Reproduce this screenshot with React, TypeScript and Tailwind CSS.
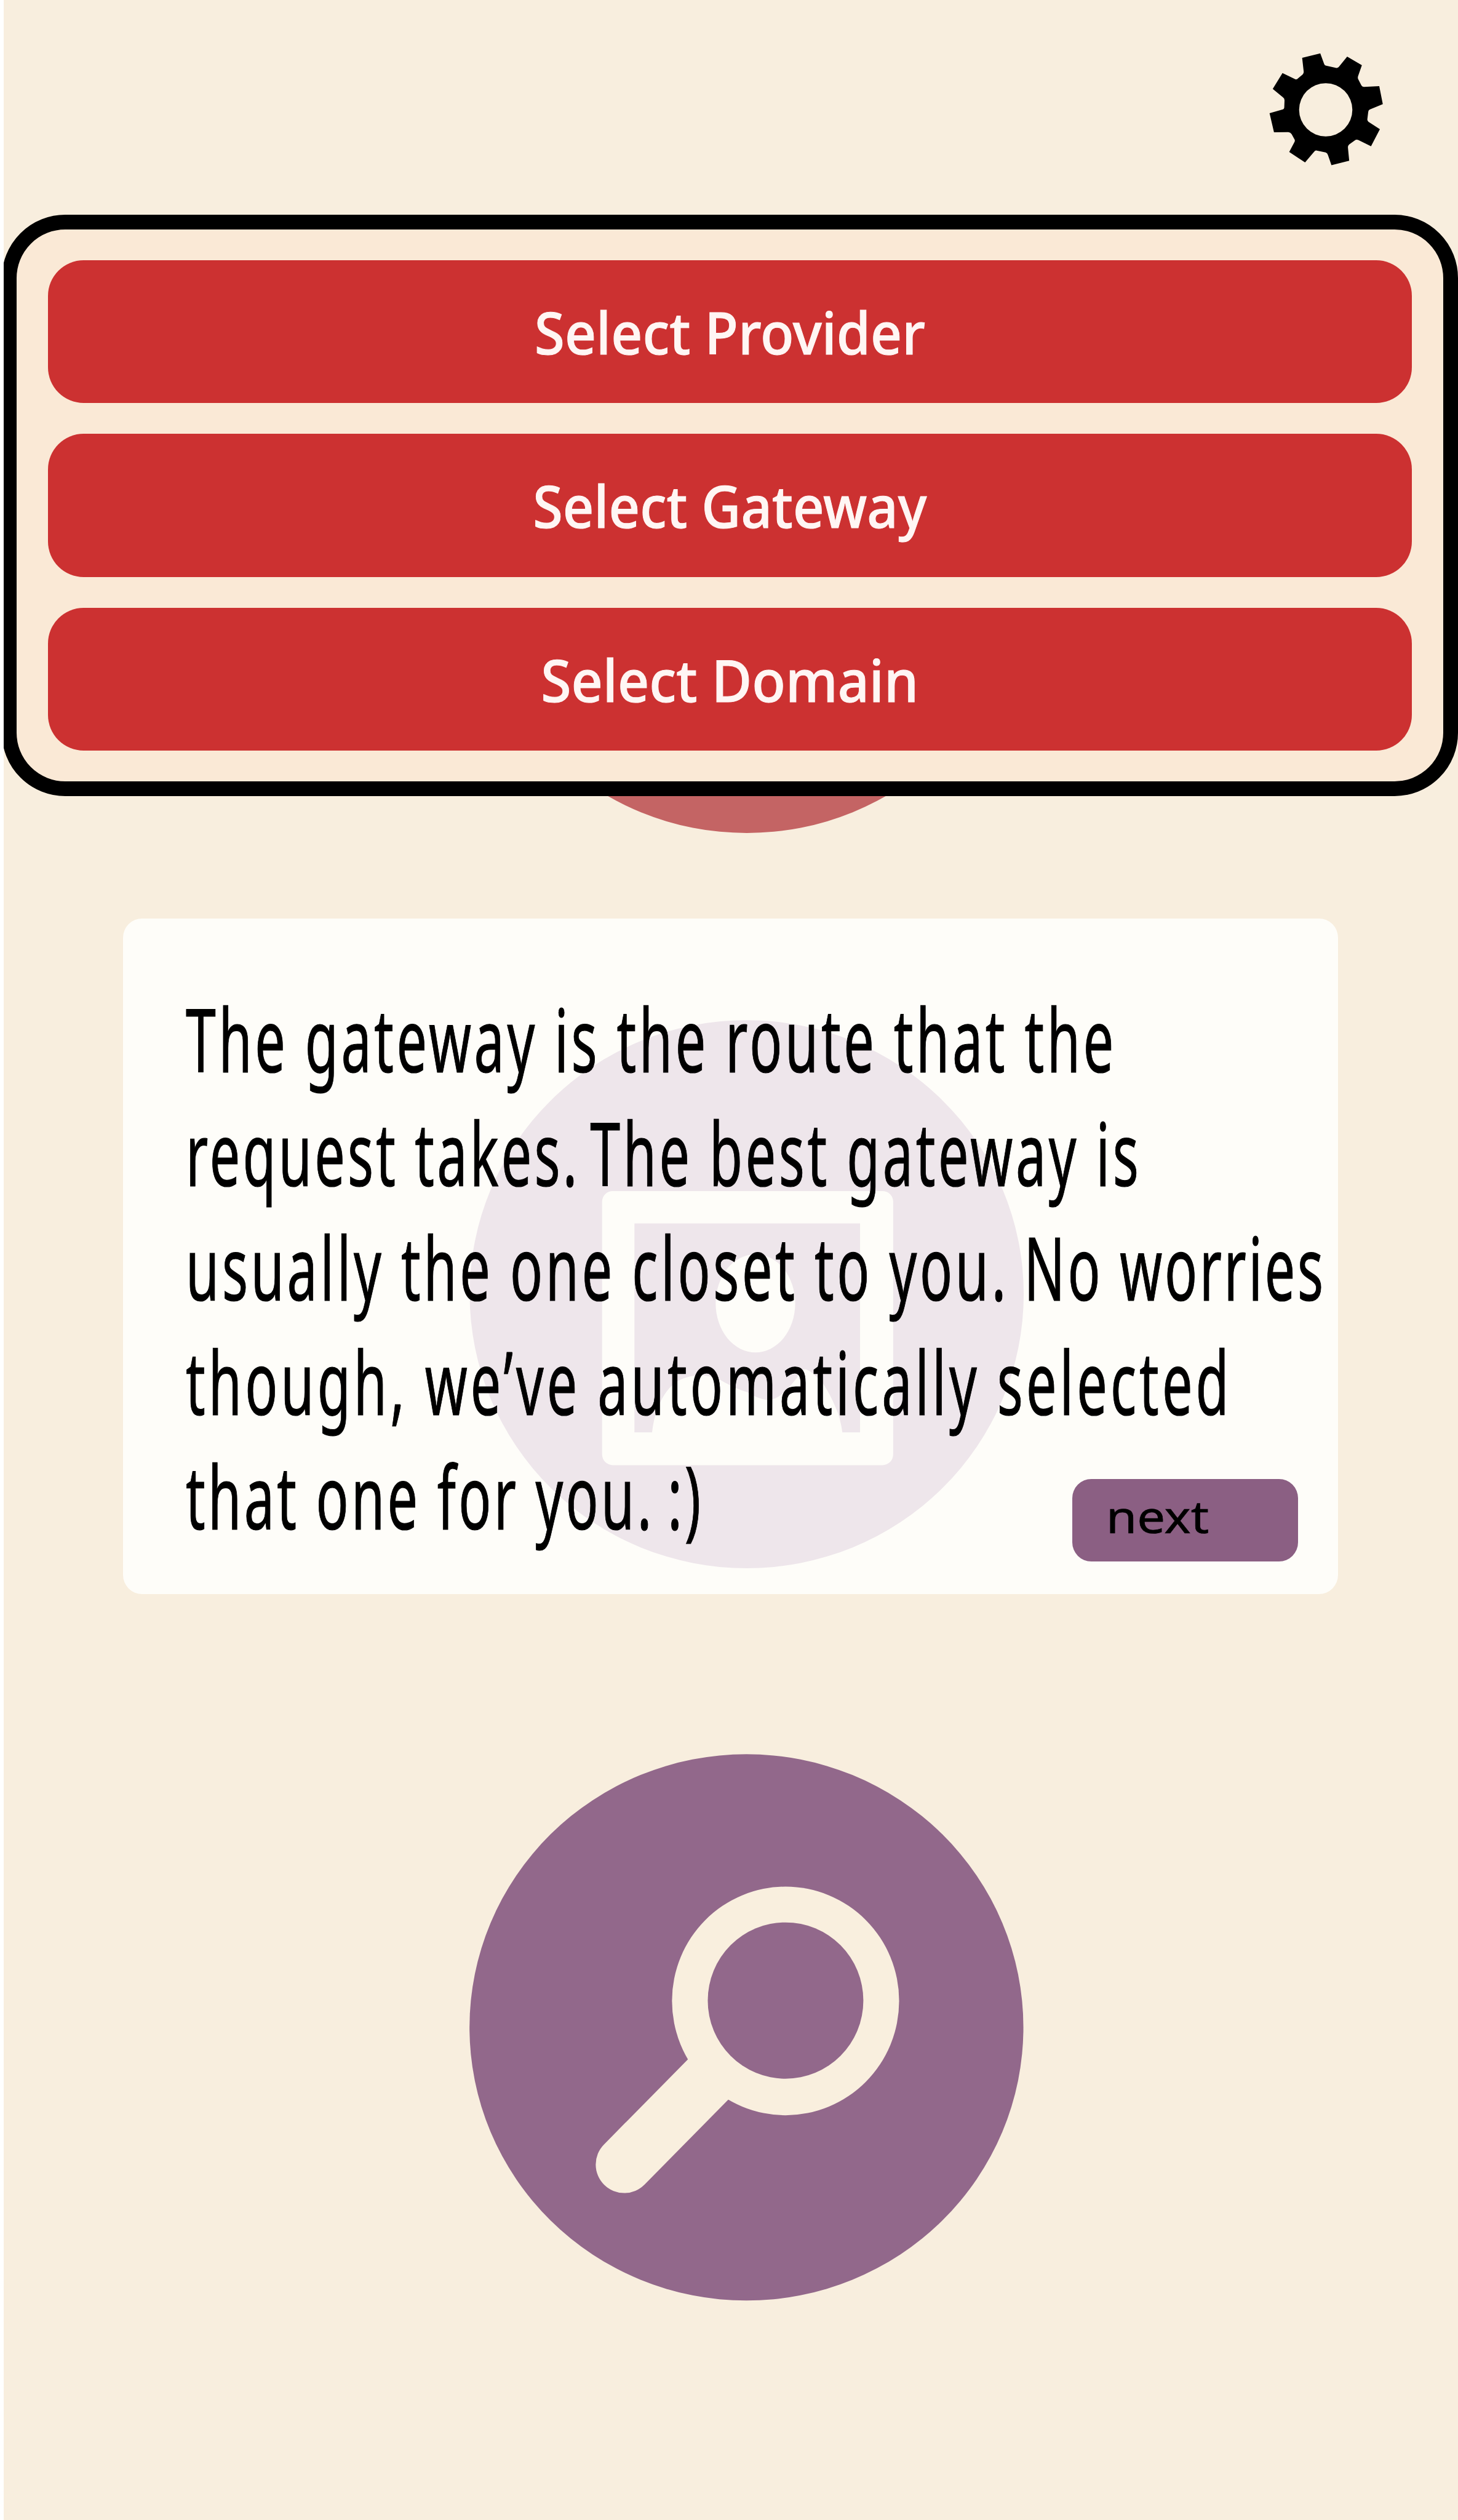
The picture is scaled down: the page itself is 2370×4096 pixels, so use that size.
const options = [
  { label: "Select Provider", fit: "scale-x-[0.944]" },
  { label: "Select Gateway", fit: "scale-x-[0.935]" },
  { label: "Select Domain", fit: "scale-x-[0.947]" },
];

// Each line is split into runs that carry their own letter spacing.
const lines = [
  [{ text: "The gateway is the route that the", style: "tracking-[7.5px]" }],
  [
    { text: "request takes. ", style: "tracking-[6.9px]" },
    { text: "The best gateway is", style: "-ml-[17px] tracking-[7.5px]" },
  ],
  [
    { text: "usually the one closet to you. ", style: "tracking-[7.6px]" },
    { text: "No ", style: "-ml-[5px] tracking-[7.2px]" },
    { text: "worries", style: "tracking-[5.9px]" },
  ],
  [{ text: "though, we’ve automatically selected", style: "tracking-[8.3px]" }],
  [
    { text: "that one for you. ", style: "tracking-[7.1px]" },
    { text: ":)", style: "-ml-[9px] tracking-[6.5px]" },
  ],
];

function GearIcon() {
  return (
    <svg viewBox="0 0 1200 1140" className="h-[235px] w-[247.4px]">
      <path
        fillRule="evenodd"
        d="M367 155L510 120L540 203Q543 216 556 217L632 234Q645 238 655 228L722 145L838 213L808 300Q803 315 811 328L834 372Q840 385 855 384L975 378L1003 520L900 563Q889 569 888 582L881 640Q880 652 890 660L980 718L910 852L812 804Q795 797 782 806L738 838Q727 848 728 862L738 966L598 1002L570 920Q566 905 552 901L482 886Q470 884 461 896L390 980L265 898L306 820Q314 805 304 793L284 757Q275 742 258 741L145 742L110 592L212 563Q226 558 226 544L228 490Q228 474 216 467L135 400L212 275L310 322Q325 329 335 317L370 287Q381 277 379 262ZM553 355A210 210 0 1 0 553 775A210 210 0 1 0 553 355Z"
      />
    </svg>
  );
}

function ProfileMark() {
  return (
    <svg viewBox="324 2415 3192 1774" preserveAspectRatio="none" className="absolute inset-0 h-full w-full">
      <ellipse cx="1963" cy="3402" rx="728" ry="720" fill="#eee6eb" />
      <rect x="1583" y="3131" width="765" height="720" rx="28" fill="#fefdf9" />
      <rect x="1668" y="3216" width="593" height="549" fill="#eee6eb" />
      <ellipse cx="1986" cy="3426" rx="104.5" ry="129" fill="#fefdf9" />
      <path
        fill="#fefdf9"
        d="M1714 3768Q1718 3730 1728 3705Q1748 3650 1784 3629Q1812 3614 1850 3615Q1880 3618 1906 3634Q1935 3650 1963 3659Q1990 3676 2016 3680Q2040 3680 2060 3660Q2080 3642 2095 3622Q2102 3600 2116 3599Q2130 3600 2164 3637Q2184 3668 2197 3700Q2209 3725 2215 3768Z"
      />
    </svg>
  );
}

function SearchCircle() {
  return (
    <svg viewBox="1234.5 4611 1456.5 1437" className="ml-[757.2px] mt-[260.3px] block h-[888.6px] w-[900.8px]">
      <ellipse cx="1962.7" cy="5329.5" rx="728" ry="718" fill="#92688b" />
      <path d="M1641.5 5690L1885 5443" stroke="#f9efde" strokeWidth="150" strokeLinecap="round" />
      <ellipse cx="2065.5" cy="5260" rx="298.5" ry="300.5" fill="#f9efde" />
      <ellipse cx="2065.5" cy="5259" rx="204.5" ry="205.5" fill="#92688b" />
    </svg>
  );
}

export default function App() {
  return (
    <div className="h-[4096px] w-[2370px] overflow-hidden bg-white pl-[6.2px] font-['Noto_Sans','Open_Sans',sans-serif]">
      <div className="h-full w-full overflow-hidden bg-[#f8eede]">
        <header className="flex h-[349.4px] justify-end pr-[82px] pt-[61.8px]">
          <button aria-label="Settings" className="h-[235px]">
            <GearIcon />
          </button>
        </header>

        <section className="relative -ml-[3.2px] h-[944.4px]">
          <div className="absolute left-[760.6px] top-[116.3px] h-[888.6px] w-[900.8px] rounded-[50%] bg-[#c46464]" />
          <div className="relative flex h-full w-full flex-col gap-[49.9px] rounded-[103px] border-[24.4px] border-black bg-[#fae9d6] px-[51px] pt-[49.4px]">
            {options.map((o) => (
              <button
                key={o.label}
                className="flex h-[232.6px] w-full items-center justify-center rounded-[58px] bg-[#cc3131] text-[94.5px] font-medium leading-none text-[#fff6f4] [-webkit-text-stroke:1px_#fff6f4]"
              >
                <span className={`block pt-[2px] ${o.fit}`}>{o.label}</span>
              </button>
            ))}
          </div>
        </section>

        <section className="relative ml-[194.2px] mt-[199.6px] flex h-[1097.5px] w-[1974.3px] flex-col rounded-[31px] bg-[#fefdf9] pl-[101.4px] pt-[101.2px]">
          <ProfileMark />
          <div className="relative origin-left scale-x-[0.612] whitespace-pre text-[143.5px] leading-[185.8px] text-black [-webkit-text-stroke:1.2px_black]">
            {lines.map((runs) => (
              <p key={runs[0].text}>
                {runs.map((r) => (
                  <span key={r.text} className={r.style}>
                    {r.text}
                  </span>
                ))}
              </p>
            ))}
          </div>
          <button className="absolute bottom-[52.8px] right-[64.6px] h-[134px] w-[367px] rounded-[31px] bg-[#8b5f83] pl-[55px] text-left">
            <span className="block h-full origin-left scale-x-[1.12] text-[72.7px] leading-[119.4px] text-black [-webkit-text-stroke:0.7px_black]">
              next
            </span>
          </button>
        </section>

        <SearchCircle />
      </div>
    </div>
  );
}
